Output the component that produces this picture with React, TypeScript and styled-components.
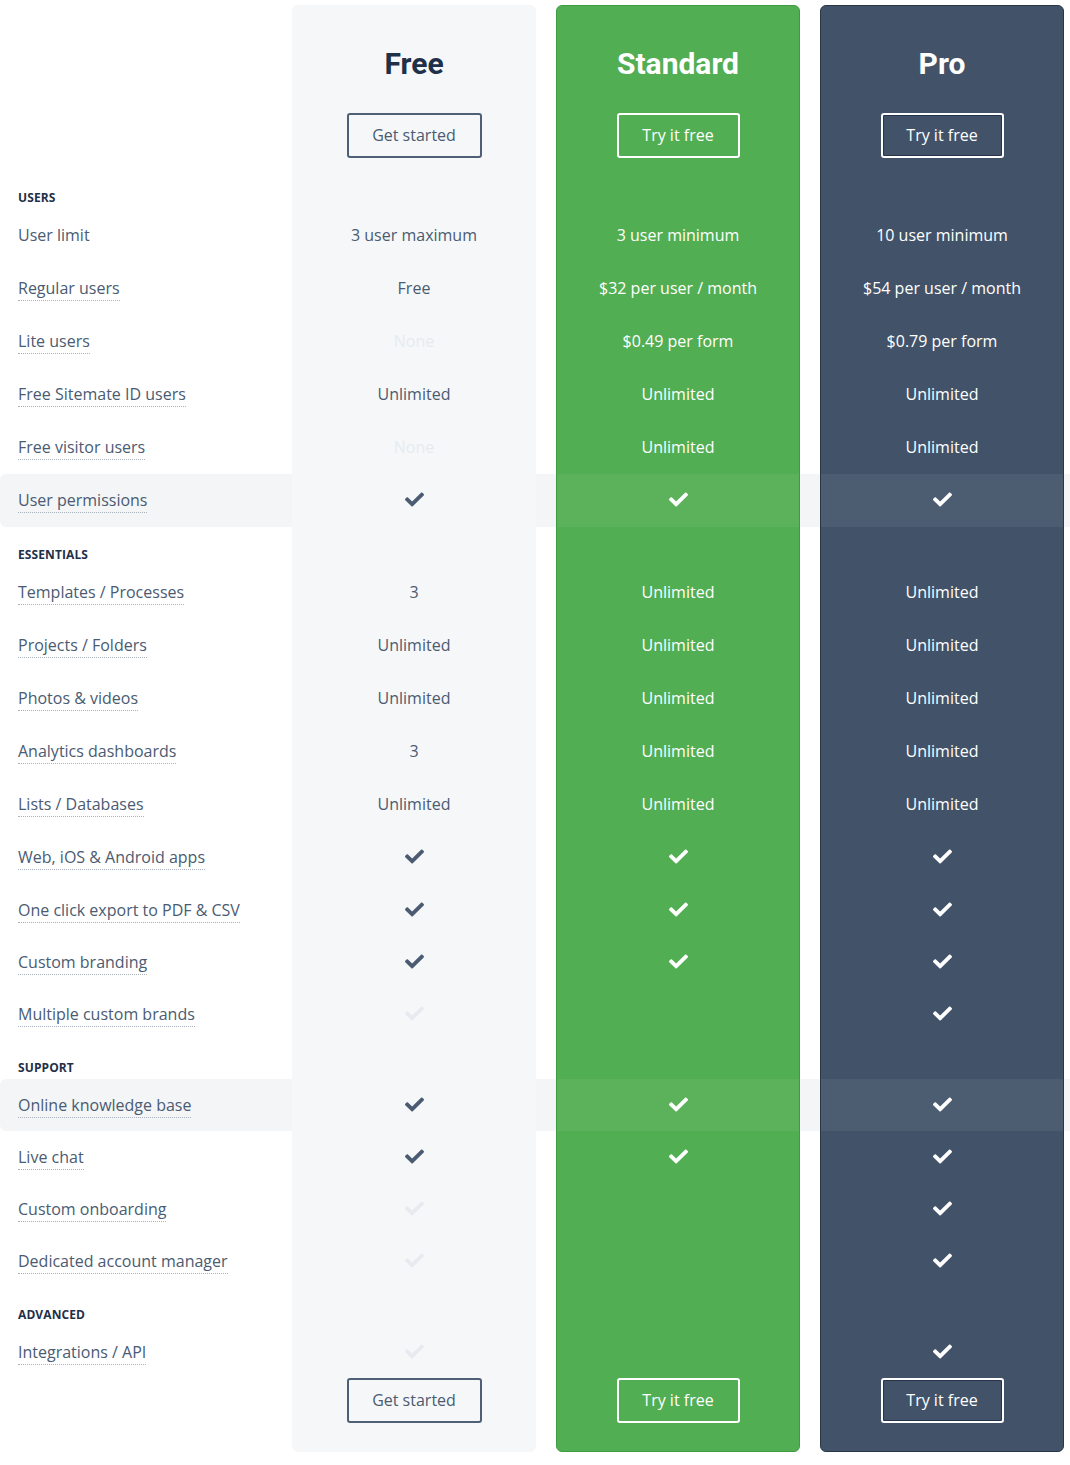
import * as React from 'react';
import styled, { createGlobalStyle } from 'styled-components';
import { FaCheck } from 'react-icons/fa';

type PlanKey = 'free' | 'standard' | 'pro';

// '✓' = tick, '-' = faded tick, 'None' = faded text, '' = nothing
interface Feature {
    label: string;
    values: [string, string, string];
    plain?: boolean;
    highlight?: boolean;
    h?: number;
}

interface Section {
    title: string;
    rows: Feature[];
}

const Y = '✓';
const N = '-';

const sections: Section[] = [
    {
        title: 'Users',
        rows: [
            { label: 'User limit', plain: true, values: ['3 user maximum', '3 user minimum', '10 user minimum'] },
            { label: 'Regular users', values: ['Free', '$32 per user / month', '$54 per user / month'] },
            { label: 'Lite users', values: ['None', '$0.49 per form', '$0.79 per form'] },
            { label: 'Free Sitemate ID users', values: ['Unlimited', 'Unlimited', 'Unlimited'] },
            { label: 'Free visitor users', values: ['None', 'Unlimited', 'Unlimited'] },
            { label: 'User permissions', highlight: true, values: [Y, Y, Y] },
        ],
    },
    {
        title: 'Essentials',
        rows: [
            { label: 'Templates / Processes', values: ['3', 'Unlimited', 'Unlimited'] },
            { label: 'Projects / Folders', values: ['Unlimited', 'Unlimited', 'Unlimited'] },
            { label: 'Photos & videos', values: ['Unlimited', 'Unlimited', 'Unlimited'] },
            { label: 'Analytics dashboards', values: ['3', 'Unlimited', 'Unlimited'] },
            { label: 'Lists / Databases', values: ['Unlimited', 'Unlimited', 'Unlimited'] },
            { label: 'Web, iOS & Android apps', values: [Y, Y, Y] },
            { label: 'One click export to PDF & CSV', h: 52, values: [Y, Y, Y] },
            { label: 'Custom branding', h: 52, values: [Y, Y, Y] },
            { label: 'Multiple custom brands', h: 52, values: [N, '', Y] },
        ],
    },
    {
        title: 'Support',
        rows: [
            { label: 'Online knowledge base', h: 52, highlight: true, values: [Y, Y, Y] },
            { label: 'Live chat', h: 52, values: [Y, Y, Y] },
            { label: 'Custom onboarding', h: 52, values: [N, '', Y] },
            { label: 'Dedicated account manager', h: 52, values: [N, '', Y] },
        ],
    },
    {
        title: 'Advanced',
        rows: [
            { label: 'Integrations / API', h: 52, values: [N, '', Y] },
        ],
    },
];

const plans: { key: PlanKey; name: string; cta: string }[] = [
    { key: 'free', name: 'Free', cta: 'Get started' },
    { key: 'standard', name: 'Standard', cta: 'Try it free' },
    { key: 'pro', name: 'Pro', cta: 'Try it free' },
];

const palette = {
    free: { bg: '#f5f7f9', border: '#f5f7f9', text: '#4b5b71', title: '#1f3049' },
    standard: { bg: '#52ae52', border: '#3f9b41', text: '#ffffff', title: '#ffffff' },
    pro: { bg: '#425369', border: '#2a3747', text: '#ffffff', title: '#ffffff' },
};

const planCol: Record<PlanKey, number> = { free: 2, standard: 4, pro: 6 };

const GlobalStyle = createGlobalStyle`
    body {
        margin: 0;
        background: #ffffff;
        font-family: "Open Sans", "Liberation Sans", sans-serif;
    }
`;

const Page = styled.div`
    padding: 5px 0 13px;
`;

const Table = styled.div<{ $rows: string }>`
    display: grid;
    grid-template-columns: 292px 244px 20px 244px 20px 244px 1fr;
    grid-template-rows: ${p => p.$rows};
`;

const Band = styled.div<{ $row: number }>`
    grid-column: 1 / -1;
    grid-row: ${p => p.$row};
    background: #f3f5f7;
    border-radius: 6px 0 0 6px;
`;

const PlanCard = styled.div<{ $plan: PlanKey }>`
    grid-column: ${p => planCol[p.$plan]};
    grid-row: 1 / -1;
    background: ${p => palette[p.$plan].bg};
    border: 1px solid ${p => palette[p.$plan].border};
    border-radius: 6px;
`;

const PlanHead = styled.div<{ $plan: PlanKey }>`
    grid-column: ${p => planCol[p.$plan]};
    grid-row: 1;
    display: flex;
    flex-direction: column;
    align-items: center;
    padding-top: 41px;
`;

const PlanTitle = styled.h2<{ $plan: PlanKey }>`
    margin: 0;
    font-family: Roboto, "Liberation Sans", sans-serif;
    font-size: 30px;
    line-height: 36px;
    font-weight: 700;
    color: ${p => palette[p.$plan].title};
`;

const PlanFoot = styled.div<{ $plan: PlanKey; $row: number }>`
    grid-column: ${p => planCol[p.$plan]};
    grid-row: ${p => p.$row};
    display: flex;
    justify-content: center;
    align-items: flex-start;
`;

const Button = styled.button<{ $plan: PlanKey; $top?: number }>`
    margin-top: ${p => p.$top || 0}px;
    width: ${p => (p.$plan === 'free' ? 135 : 123)}px;
    height: 45px;
    border-radius: 3px;
    border: 2px solid ${p => (p.$plan === 'free' ? '#4f6076' : '#ffffff')};
    background: ${p => palette[p.$plan].bg};
    box-shadow: ${p => (p.$plan === 'pro' ? 'inset 0 0 0 1px #27344a' : 'none')};
    color: ${p => palette[p.$plan].text};
    font-family: "Open Sans", "Liberation Sans", sans-serif;
    font-size: 16px;
    padding: 0 0 1px;
    cursor: pointer;
`;

const SectionTitle = styled.div<{ $row: number }>`
    grid-column: 1;
    grid-row: ${p => p.$row};
    padding: 20px 0 0 18px;
    font-size: 12px;
    line-height: 15px;
    font-weight: 700;
    color: #1f3049;
    text-transform: uppercase;
    letter-spacing: 0.1px;
`;

const LabelCell = styled.div<{ $row: number }>`
    grid-column: 1;
    grid-row: ${p => p.$row};
    display: flex;
    align-items: center;
    padding-left: 18px;
`;

const Label = styled.span<{ $plain?: boolean }>`
    font-size: 16px;
    line-height: 21px;
    color: #4a5b72;
    border-bottom: 1px dotted ${p => (p.$plain ? 'transparent' : '#aab3bd')};
    padding-bottom: 1px;
    margin-top: 2px;
`;

const ValueCell = styled.div<{ $plan: PlanKey; $row: number; $hl?: boolean }>`
    grid-column: ${p => planCol[p.$plan]};
    grid-row: ${p => p.$row};
    margin: 0 1px;
    padding-bottom: 2px;
    display: flex;
    align-items: center;
    justify-content: center;
    font-size: 16px;
    color: ${p => palette[p.$plan].text};
    background: ${p => (p.$hl && p.$plan !== 'free' ? 'rgba(255, 255, 255, 0.055)' : 'transparent')};
`;

const Faded = styled.span`
    color: #e7ebef;
    display: flex;
`;

function Value({ v }: { v: string }) {
    if (v === Y) return <FaCheck size={19} />;
    if (v === N) return <Faded><FaCheck size={19} /></Faded>;
    if (v === 'None') return <Faded>None</Faded>;
    return <>{v}</>;
}

export default function App() {
    const heights: number[] = [165];
    const items: JSX.Element[] = [];
    const bands: JSX.Element[] = [];

    sections.forEach(section => {
        heights.push(39);
        const sRow = heights.length;
        items.push(<SectionTitle key={section.title} $row={sRow}>{section.title}</SectionTitle>);

        section.rows.forEach(row => {
            heights.push(row.h || 53);
            const r = heights.length;
            if (row.highlight) bands.push(<Band key={'band' + r} $row={r} />);
            items.push(
                <LabelCell key={'l' + r} $row={r}>
                    <Label $plain={row.plain}>{row.label}</Label>
                </LabelCell>
            );
            plans.forEach((plan, i) => {
                items.push(
                    <ValueCell key={plan.key + r} $plan={plan.key} $row={r} $hl={row.highlight}>
                        <Value v={row.values[i]} />
                    </ValueCell>
                );
            });
        });
    });

    heights.push(74);
    const footRow = heights.length;

    return (
        <Page>
            <GlobalStyle />
            <Table $rows={heights.map(h => h + 'px').join(' ')}>
                {bands}
                {plans.map(plan => <PlanCard key={'card' + plan.key} $plan={plan.key} />)}
                {plans.map(plan => (
                    <PlanHead key={'head' + plan.key} $plan={plan.key}>
                        <PlanTitle $plan={plan.key}>{plan.name}</PlanTitle>
                        <Button $plan={plan.key} $top={31}>{plan.cta}</Button>
                    </PlanHead>
                ))}
                {items}
                {plans.map(plan => (
                    <PlanFoot key={'foot' + plan.key} $plan={plan.key} $row={footRow}>
                        <Button $plan={plan.key}>{plan.cta}</Button>
                    </PlanFoot>
                ))}
            </Table>
        </Page>
    );
}
